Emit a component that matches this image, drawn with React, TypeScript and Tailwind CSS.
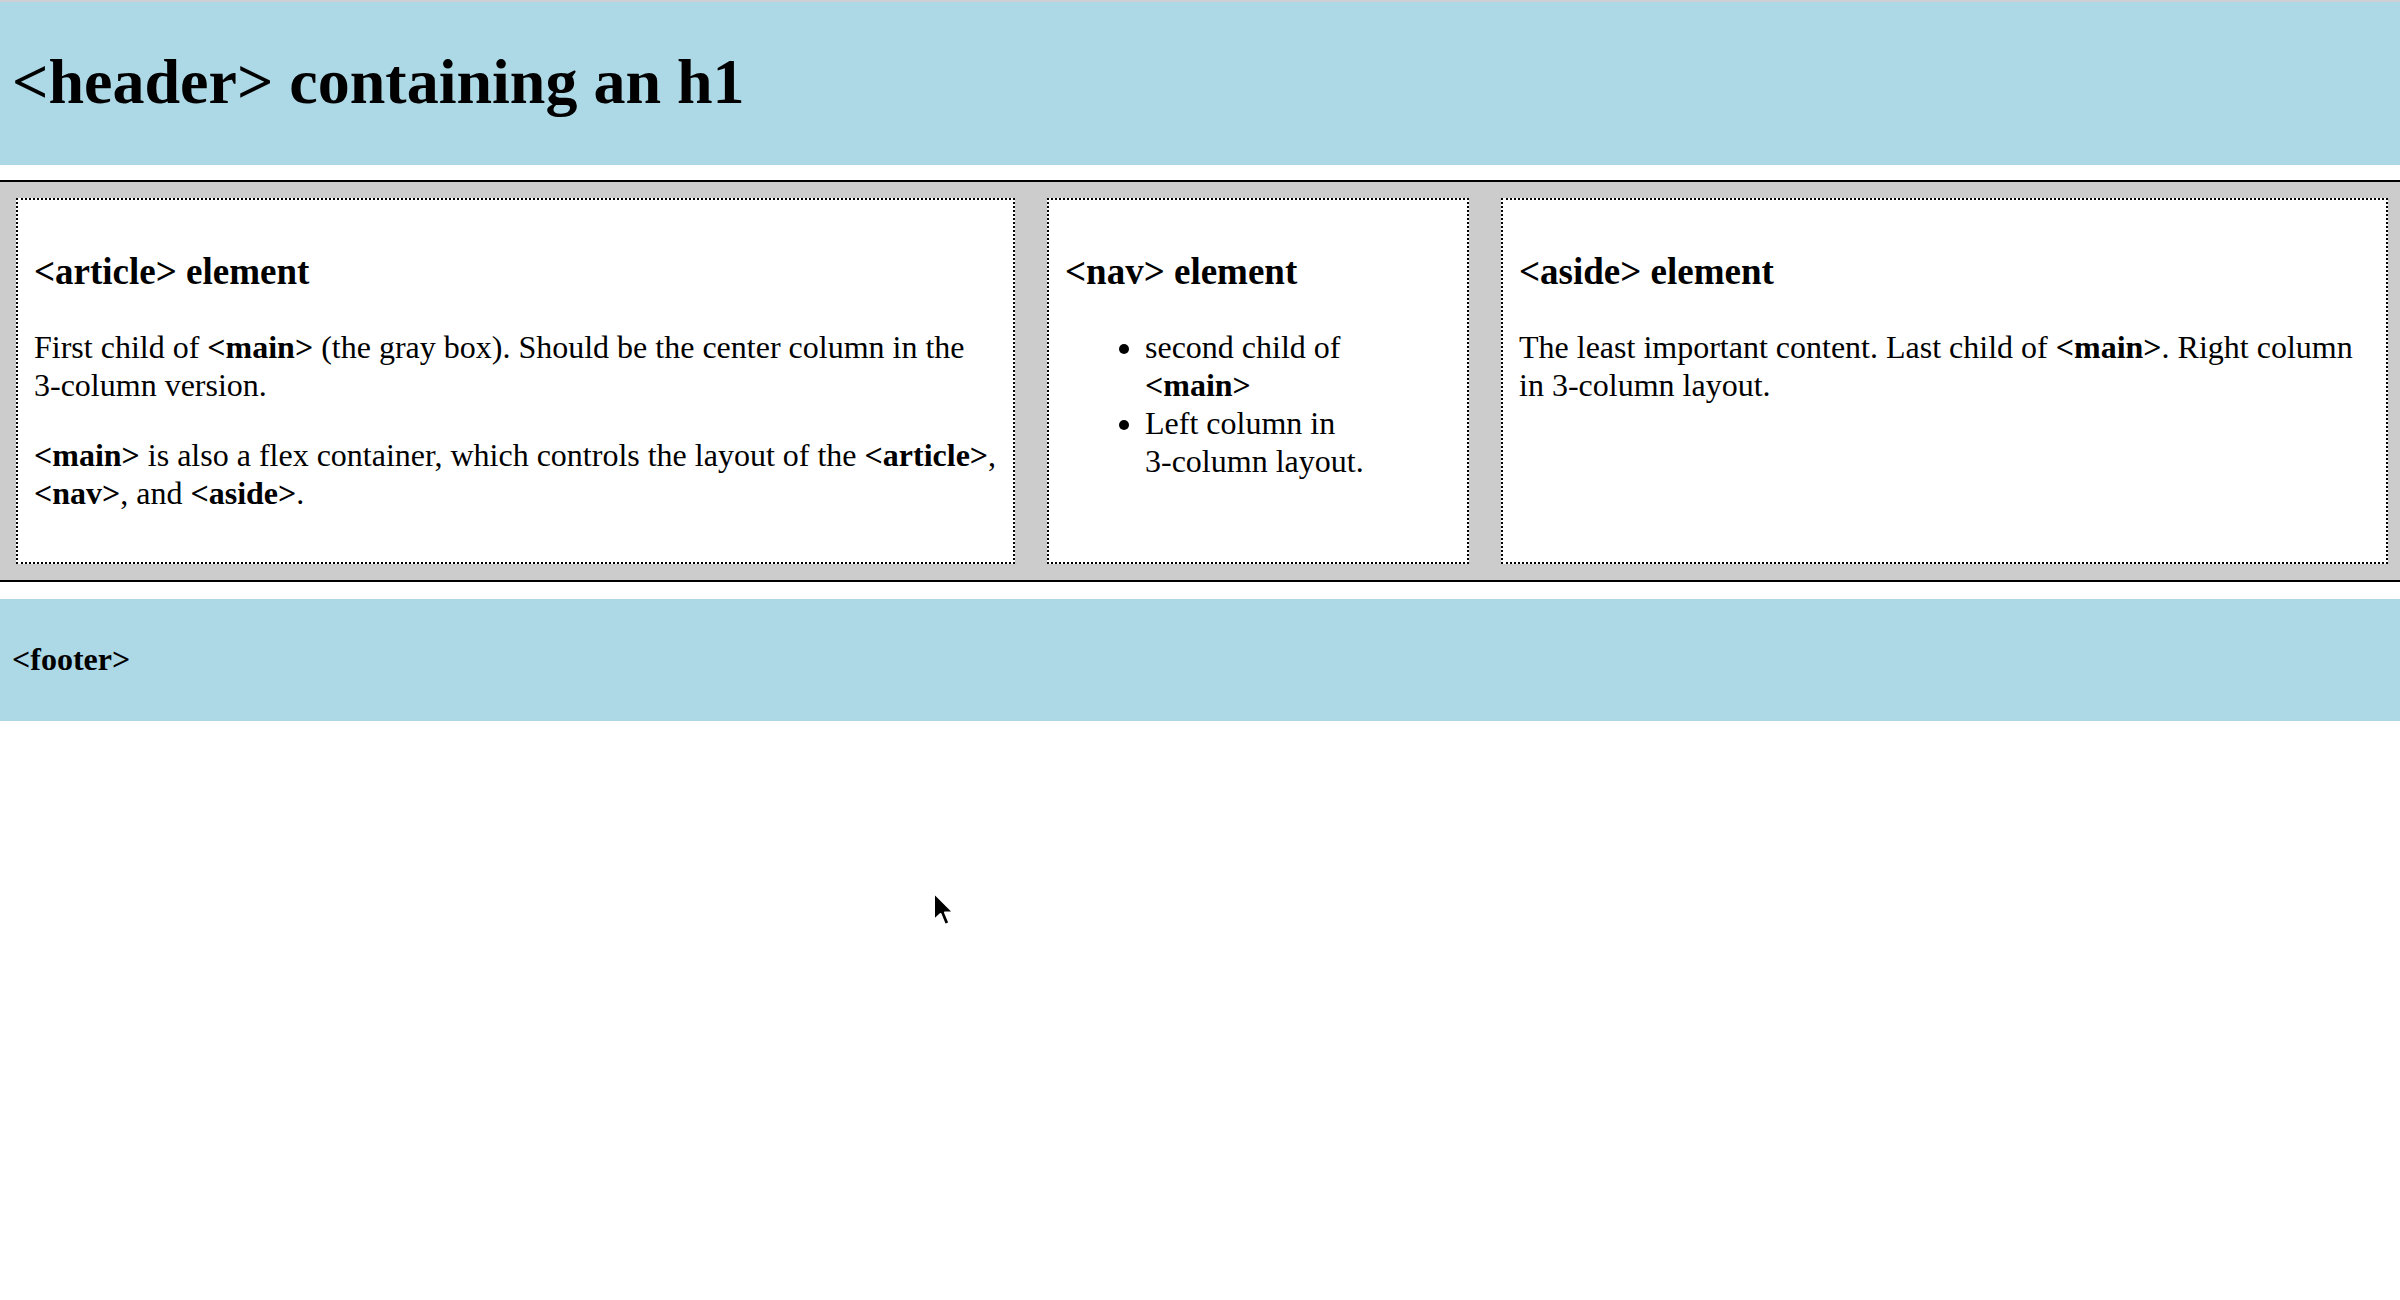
import React from "react";

function Cursor() {
  return (
    <svg
      className="absolute left-[930px] top-[890px]"
      width="26"
      height="40"
      viewBox="0 0 26 40"
    >
      <path
        d="M4 3 L4 30 L10.5 24 L15 35 L19.5 33 L15 22.5 L23.5 22.5 Z"
        fill="#000"
        stroke="#fff"
        strokeWidth="2"
        strokeLinejoin="round"
      />
    </svg>
  );
}

export default function App() {
  return (
    <div className="relative min-h-screen bg-white text-black font-['Liberation_Serif','Times_New_Roman',serif]">
      <header className="border-t-2 border-[#cdd1d3] bg-[#add8e6] px-[12px] pt-[43px] pb-[46px]">
        <h1 className="text-[64px] font-bold leading-[74px]">&lt;header&gt; containing an h1</h1>
      </header>

      <main className="mt-[15px] flex items-stretch gap-[32px] border-y-2 border-black bg-[#cccccc] pl-[16px] pr-[12px] py-[16px] text-[32px] leading-[38px]">
        <article className="w-[999px] shrink-0 border-2 border-dotted border-black bg-white px-[16px] pt-[13px] pb-[18px]">
          <h3 className="mt-[37px] mb-[35px] text-[37px] font-bold leading-[43px]">&lt;article&gt; element</h3>
          <p className="my-[32px]">
            First child of <b>&lt;main&gt;</b> (the gray box). Should be the center column in the{" "}
            <span className="whitespace-nowrap">3-column</span> version.
          </p>
          <p className="my-[32px]">
            <b>&lt;main&gt;</b> is also a flex container, which controls the layout of the <b>&lt;article&gt;</b>,{" "}
            <b>&lt;nav&gt;</b>, and <b>&lt;aside&gt;</b>.
          </p>
        </article>

        <nav className="w-[422px] shrink-0 border-2 border-dotted border-black bg-white px-[16px] pt-[13px] pb-[18px]">
          <h3 className="mt-[37px] mb-[35px] text-[37px] font-bold leading-[43px]">&lt;nav&gt; element</h3>
          <ul className="my-[32px] list-disc pl-[80px]">
            <li>
              second child of <b>&lt;main&gt;</b>
            </li>
            <li>
              Left column in <span className="whitespace-nowrap">3-column</span> layout.
            </li>
          </ul>
        </nav>

        <aside className="min-w-0 flex-1 border-2 border-dotted border-black bg-white px-[16px] pt-[13px] pb-[18px]">
          <h3 className="mt-[37px] mb-[35px] text-[37px] font-bold leading-[43px]">&lt;aside&gt; element</h3>
          <p className="my-[32px]">
            The least important content. Last child of <b>&lt;main&gt;</b>. Right column in{" "}
            <span className="whitespace-nowrap">3-column</span> layout.
          </p>
        </aside>
      </main>

      <footer className="mt-[17px] bg-[#add8e6] px-[12px] pt-[42px] pb-[43px]">
        <h4 className="text-[32px] font-bold leading-[37px]">&lt;footer&gt;</h4>
      </footer>

      <Cursor />
    </div>
  );
}
